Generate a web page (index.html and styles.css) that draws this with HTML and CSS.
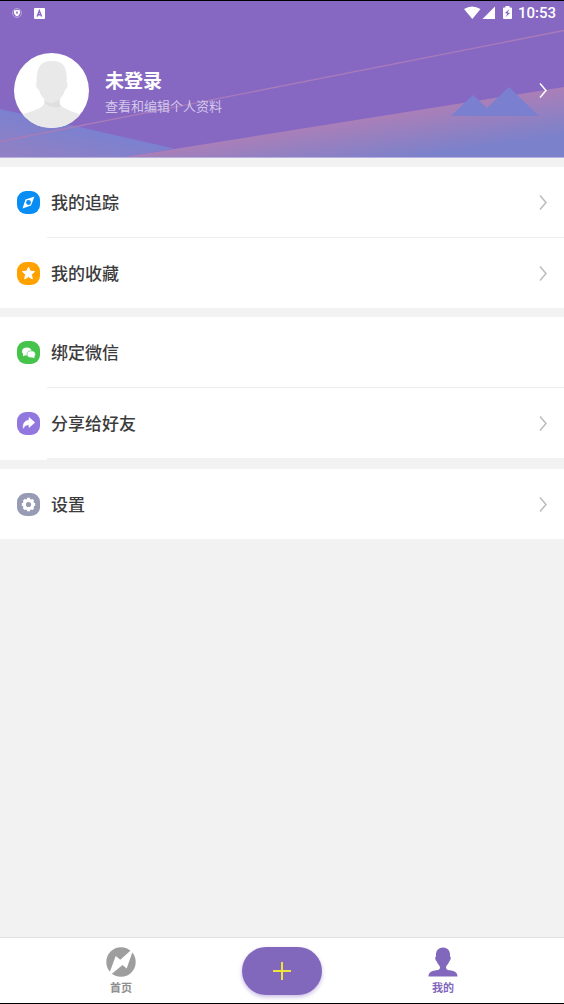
FILE: index.html
```html
<!DOCTYPE html>
<html lang="zh-CN">
<head>
<meta charset="utf-8">
<meta name="viewport" content="width=device-width, initial-scale=1">
<title>我的</title>
<link rel="stylesheet" href="styles.css">
</head>
<body>
<div class="app">
  <header class="hero">
    <svg class="scenery" viewBox="0 1 564 157" preserveAspectRatio="none" aria-hidden="true">
      <defs>
        <linearGradient id="lake" gradientUnits="userSpaceOnUse" x1="60" y1="120" x2="48" y2="172">
          <stop offset="0" stop-color="#7a81d0"/><stop offset="1" stop-color="#9580c2"/>
        </linearGradient>
        <linearGradient id="dune" gradientUnits="userSpaceOnUse" x1="400" y1="113" x2="407" y2="159">
          <stop offset="0" stop-color="#aa7fb8"/><stop offset="1" stop-color="#7b81cb"/>
        </linearGradient>
      </defs>
      <path fill="url(#lake)" d="M0 109 174 148.500 120 158H0z"/>
      <path fill="url(#dune)" d="M118 158 564 87V158z"/>
      <path fill="none" stroke="#a87bb9" stroke-width="1.400" d="M0 141.500 564 30.500"/>
      <path fill="#7a80cf" d="M451 116 473 95 487 108 509 87 539 116z"/>
      <path fill="#b5b0de" d="M0 157H564V158H0z"/>
    </svg>
    <div class="status">
      <div class="status-group status-left">
        <svg width="10" height="10" viewBox="0 0 10 10" aria-hidden="true">
          <circle cx="5" cy="5" r="4.500" fill="none" stroke="#b9a5dd"/>
          <path fill="#fff" d="M2 2.500 5 1.800 8 2.500V5Q7.500 7.500 5 8.500 2.500 7.500 2 5z"/>
          <path fill="#8668c3" d="M4.200 3.500H5.800V5L5 6.500 4.200 5z"/>
        </svg>
        <svg width="11" height="11" viewBox="0 0 11 11" aria-hidden="true">
          <rect width="11" height="11" rx="1" fill="#fff"/>
          <path fill="none" stroke="#8668c3" stroke-width="1.400" d="M3.200 8.500 5.300 2.800 7.600 8.500M4 6.700H6.900"/>
        </svg>
      </div>
      <div class="status-group">
        <svg width="32" height="14" viewBox="0 0 32 14" aria-hidden="true">
          <path fill="#fff" d="M0 3Q8-2 16.500 3L8.300 13z"/>
          <path fill="#fff" d="M31 .500V13H18.500z"/>
        </svg>
        <svg class="battery" width="9" height="14" viewBox="0 0 9 14" aria-hidden="true">
          <path fill="#fff" d="M2.500 0H6.500V1.500H8Q9 1.500 9 2.500V12Q9 13 8 13H1Q0 13 0 12V2.500Q0 1.500 1 1.500H2.500z"/>
          <path fill="#8668c3" d="M6.500 3 2 7 4.300 7.700 2.500 11.300 7 7.100 4.700 6.500z"/>
        </svg>
        <span class="clock">10:53</span>
      </div>
    </div>
    <a class="profile" href="#profile">
      <svg class="avatar" viewBox="0 0 74 74" aria-hidden="true">
        <defs><clipPath id="disc"><circle cx="37" cy="37" r="37"/></clipPath></defs>
        <circle cx="37" cy="37" r="37" fill="#fff"/>
        <g clip-path="url(#disc)">
          <path fill="#e9e9e9" d="M30 44H45V49C46 55 58 57 66 61V76H8V61C17 57 29 55 30 49z"/>
          <path fill="#dfdfdf" d="M30 47Q37 53 45 44V50L46 53Q36 55 30 49z"/>
          <path fill="#e9e9e9" d="M22.500 29C22 13 27 8 37.500 8S53 13 52 29C54 29 52.500 36 50.500 36C49 43 43 49 37.500 49S26 43 24.500 36C22 36 21 29 22.500 29z"/>
        </g>
      </svg>
      <span class="identity">
        <strong class="name">未登录</strong>
        <span class="hint">查看和编辑个人资料</span>
      </span>
      <svg class="chevron chevron-light" viewBox="0 0 8 15" aria-hidden="true"><path d="M1 .500 7 7.500 1 14.500"/></svg>
    </a>
  </header>

  <main class="menus">
    <nav class="menu">
      <a class="row" href="#tracking">
        <svg class="icon" viewBox="0 0 23 23" aria-hidden="true"><rect class="blue" width="23" height="23" rx="9"/><path fill="#fff" d="M17.500 5.500 14 14.500 5.500 17.500 8.500 8.500z"/><circle class="blue" cx="11.500" cy="11.500" r="2.400"/></svg>
        <span class="label">我的追踪</span>
        <svg class="chevron" viewBox="0 0 8 15" aria-hidden="true"><path d="M1 .500 7 7.500 1 14.500"/></svg>
      </a>
      <a class="row" href="#favorites">
        <svg class="icon" viewBox="0 0 23 23" aria-hidden="true"><rect fill="#ffa200" width="23" height="23" rx="9"/><path fill="#fff" stroke="#fff" stroke-linejoin="round" d="M11.500 5.300 13.300 9.200 17.500 9.600 14.400 12.500 15.300 16.900 11.500 14.600 7.700 16.900 8.600 12.500 5.500 9.600 9.700 9.200z"/></svg>
        <span class="label">我的收藏</span>
        <svg class="chevron" viewBox="0 0 8 15" aria-hidden="true"><path d="M1 .500 7 7.500 1 14.500"/></svg>
      </a>
    </nav>
    <nav class="menu menu-ruled">
      <a class="row" href="#wechat">
        <svg class="icon" viewBox="0 0 23 23" aria-hidden="true"><rect fill="#46c34b" width="23" height="23" rx="9"/><ellipse cx="9.800" cy="10.400" rx="4.800" ry="4" fill="#fff"/><path fill="#fff" d="M6 12.500 6 15.300 9 14z"/><ellipse cx="14.200" cy="13.300" rx="4.200" ry="3.500" fill="#fff" stroke="#46c34b" stroke-width=".6"/><path fill="#fff" d="M15 16.300 17.400 17.300 17.300 15z"/></svg>
        <span class="label">绑定微信</span>
      </a>
      <a class="row" href="#share">
        <svg class="icon" viewBox="0 0 23 23" aria-hidden="true"><rect fill="#9277df" width="23" height="23" rx="9"/><path fill="#fff" stroke="#fff" stroke-width=".6" stroke-linejoin="round" d="M12 5.500 17.800 10.500 12 15.500V12.800C9 12.700 7.500 14 6.300 16.300 5.700 12 7.500 8.500 12 8.300z"/></svg>
        <span class="label">分享给好友</span>
        <svg class="chevron" viewBox="0 0 8 15" aria-hidden="true"><path d="M1 .500 7 7.500 1 14.500"/></svg>
      </a>
    </nav>
    <nav class="menu">
      <a class="row" href="#settings">
        <svg class="icon" viewBox="0 0 23 23" aria-hidden="true"><rect fill="#979cb4" width="23" height="23" rx="9"/><circle cx="11.500" cy="11.500" r="4.200" fill="none" stroke="#fff" stroke-width="3.200"/><path stroke="#fff" stroke-width="3" d="M11.500 4.800V7M11.500 16V18.200M4.800 11.500H7M16 11.500H18.200M6.800 6.800 8 8M15 15 16.200 16.200M6.800 16.200 8 15M15 8 16.200 6.800"/></svg>
        <span class="label">设置</span>
        <svg class="chevron" viewBox="0 0 8 15" aria-hidden="true"><path d="M1 .500 7 7.500 1 14.500"/></svg>
      </a>
    </nav>
  </main>

  <nav class="tabs">
    <a class="tab" href="#home">
      <svg class="tab-icon" viewBox="0 0 30 30" aria-hidden="true"><circle cx="15" cy="15" r="14.700" fill="#9e9e9e"/><path fill="#fff" d="M28 .500 20.700 21.500 16.500 18 2 30 9.700 9 14.300 12.700z"/></svg>
      <span>首页</span>
    </a>
    <button class="add" type="button" aria-label="添加">
      <svg width="20" height="20" viewBox="0 0 20 20" aria-hidden="true"><path stroke="#f0e43c" stroke-width="2" d="M1 10H19M10 1V19"/></svg>
    </button>
    <a class="tab tab-active" href="#me">
      <svg class="tab-icon" viewBox="0 0 30 30" aria-hidden="true"><path fill="#8168bd" d="M15 .500C20 .500 22.500 4 22 9.500C23.500 10 22.500 13.500 21.500 14C20.500 17 18.500 18.500 18 20C18 23 20 23 23 23.500C27.500 24.200 29.500 26 29.500 29.500H.500C.500 26 2.500 24.200 7 23.500C10 23 12 23 12 20C11.500 18.500 9.500 17 8.500 14C7.500 13.500 6.500 10 8 9.500C7.500 4 10 .500 15 .500z"/></svg>
      <span>我的</span>
    </a>
  </nav>
</div>
</body>
</html>
```

FILE: styles.css
```css
* {
  box-sizing: border-box;
}

body {
  margin: 0;
  background: #f2f2f2;
  color: #3c3c3c;
  font-family: "Noto Sans CJK SC", sans-serif;
}

a {
  color: inherit;
  text-decoration: none;
}

svg {
  display: block;
  flex-shrink: 0;
}

.app {
  display: flex;
  flex-direction: column;
  min-height: 100vh;
  border-top: 1px solid #000;
  border-bottom: 1px solid #000;
}

/* Header */
.hero {
  position: relative;
  background: #8668c3;
  color: #fff;
}

.scenery {
  position: absolute;
  inset: 0;
  width: 100%;
  height: 100%;
}

.status,
.profile {
  position: relative;
  display: flex;
  align-items: center;
}

.status {
  justify-content: space-between;
  height: 24px;
  padding: 0 8px 0 12px;
}

.status-group {
  display: flex;
  align-items: center;
}

.status-left {
  gap: 12px;
}

.battery {
  margin-right: 6px;
  margin-left: 7px;
}

.clock {
  font: 500 15px/24px Roboto, sans-serif;
}

.profile {
  padding: 28px 17px 30px 14px;
}

.avatar {
  width: 75px;
  height: 75px;
}

.identity {
  display: flex;
  flex: 1;
  flex-direction: column;
  gap: 2px;
  margin-left: 16px;
}

.name {
  font-size: 19px;
  font-weight: 700;
  line-height: 28px;
}

.hint {
  color: #d3c7e9;
  font-size: 13px;
  line-height: 20px;
}

.chevron {
  width: 8px;
  height: 15px;
  fill: none;
  stroke: #bbb;
  stroke-width: 1.5px;
}

.chevron-light {
  stroke: #fff;
}

/* Menu lists */
.menus {
  display: flex;
  flex: 1;
  flex-direction: column;
  gap: 9px;
  padding-top: 9px;
}

.menu {
  background: #fff;
}

.row {
  display: flex;
  align-items: center;
  height: 70px;
  padding: 0 17px;
}

.row + .row::before,
.menu-ruled::after {
  content: "";
  display: block;
  height: 1px;
  background: #ededed;
}

.row + .row {
  position: relative;
  margin-top: 1px;
}

.row + .row::before {
  position: absolute;
  top: -1px;
  right: 0;
  left: 47px;
}

.menu-ruled::after {
  height: 2px;
  margin-left: 47px;
  background: #f2f2f2;
}

.icon {
  width: 23px;
  height: 23px;
}

.blue {
  fill: #078df4;
}

.label {
  flex: 1;
  margin-left: 11px;
  font-size: 17px;
  font-weight: 500;
  line-height: 24px;
}

/* Bottom tabs */
.tabs {
  display: flex;
  align-items: center;
  height: 66px;
  border-top: 1px solid #e2e2e2;
  background: #fff;
}

.tab {
  display: flex;
  flex: 1;
  flex-direction: column;
  align-items: center;
  gap: 2px;
  color: #8f8f8f;
  font-size: 11px;
  font-weight: 700;
  line-height: 16px;
}

.tab-active {
  color: #8168bd;
}

.tab-icon {
  width: 30px;
  height: 30px;
}

.add {
  display: flex;
  align-items: center;
  justify-content: center;
  width: 80px;
  height: 48px;
  padding: 0;
  border: 0;
  border-radius: 24px;
  background: #8168bd;
  box-shadow: 0 2px 4px #c9bde5;
}
```
